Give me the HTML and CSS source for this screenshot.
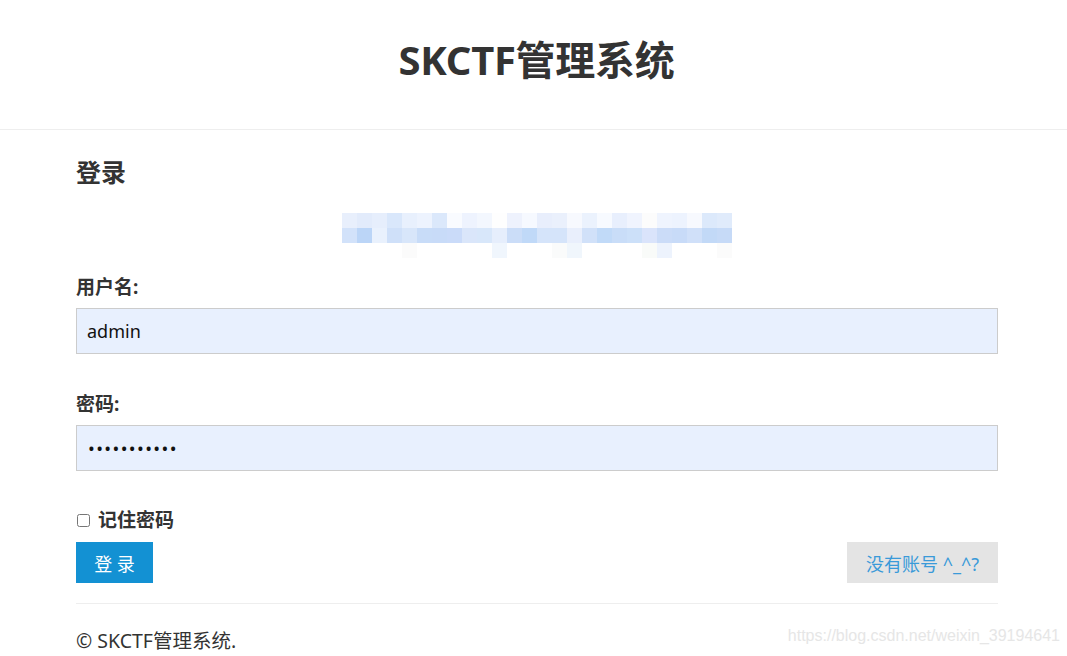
FILE: index.html
```html
<!DOCTYPE html>
<html lang="zh-CN">
<head>
<meta charset="utf-8">
<title>SKCTF管理系统</title>
<link rel="stylesheet" href="styles.css">
</head>
<body>
<header class="site-header">
  <h1 class="site-title">SKCTF管理系统</h1>
</header>
<main class="container">
  <h2 class="page-heading">登录</h2>
  <div class="captcha">
    <div class="px" style="background:#e8effc"></div><div class="px" style="background:#e2ebfb"></div><div class="px" style="background:#e6eefc"></div><div class="px" style="background:#d9e7fb"></div><div class="px" style="background:#e8f0fd"></div><div class="px" style="background:#edf3fe"></div><div class="px" style="background:#dbe8fb"></div><div class="px" style="background:#f9fbff"></div><div class="px" style="background:#eef3fe"></div><div class="px" style="background:#f3f7fe"></div><div class="px" style="background:#fefefe"></div><div class="px" style="background:#eef2fd"></div><div class="px" style="background:#f6f9ff"></div><div class="px" style="background:#e8eefc"></div><div class="px" style="background:#eaf0fc"></div><div class="px" style="background:#f7f9fe"></div><div class="px" style="background:#ebf2fd"></div><div class="px" style="background:#f7faff"></div><div class="px" style="background:#e8effd"></div><div class="px" style="background:#f0f4fe"></div><div class="px" style="background:#fcfcfc"></div><div class="px" style="background:#eff4fe"></div><div class="px" style="background:#edf3fe"></div><div class="px" style="background:#f7f9fe"></div><div class="px" style="background:#dce9fb"></div><div class="px" style="background:#e0ebfb"></div>
    <div class="px" style="background:#d2e2fa"></div><div class="px" style="background:#bbd5f7"></div><div class="px" style="background:#e9f1fd"></div><div class="px" style="background:#cfe0f9"></div><div class="px" style="background:#d8e6fa"></div><div class="px" style="background:#c8dcf8"></div><div class="px" style="background:#c8dbf8"></div><div class="px" style="background:#cadbf9"></div><div class="px" style="background:#dae6fa"></div><div class="px" style="background:#d8e7fa"></div><div class="px" style="background:#e6eefc"></div><div class="px" style="background:#cbddf8"></div><div class="px" style="background:#c0d9f8"></div><div class="px" style="background:#d5e4fa"></div><div class="px" style="background:#d5e4fa"></div><div class="px" style="background:#e9effc"></div><div class="px" style="background:#d1e1f9"></div><div class="px" style="background:#c1daf8"></div><div class="px" style="background:#c9ddf8"></div><div class="px" style="background:#cce0f9"></div><div class="px" style="background:#dae4fb"></div><div class="px" style="background:#cbdcf8"></div><div class="px" style="background:#c8dbf8"></div><div class="px" style="background:#d0e0f9"></div><div class="px" style="background:#c2d9f7"></div><div class="px" style="background:#c6daf7"></div>
    <div class="px"></div><div class="px"></div><div class="px"></div><div class="px"></div><div class="px" style="background:#fbfbfb"></div><div class="px"></div><div class="px"></div><div class="px"></div><div class="px"></div><div class="px"></div><div class="px" style="background:#f0f6fd"></div><div class="px"></div><div class="px"></div><div class="px"></div><div class="px" style="background:#fafbfb"></div><div class="px" style="background:#f0f6fc"></div><div class="px"></div><div class="px"></div><div class="px"></div><div class="px"></div><div class="px" style="background:#f9fbf9"></div><div class="px" style="background:#edf3fd"></div><div class="px"></div><div class="px"></div><div class="px"></div><div class="px" style="background:#fbfbfb"></div>
  </div>
  <form class="login-form">
    <label class="field-label" for="username">用户名:</label>
    <input class="field-input" id="username" type="text" value="admin">
    <label class="field-label field-label-2" for="password">密码:</label>
    <input class="field-input field-password" id="password" type="password" value="aaaaaaaaaaa">
    <label class="remember"><input type="checkbox" class="remember-box"><span>记住密码</span></label>
    <div class="actions">
      <button type="button" class="btn btn-primary">登 录</button>
      <button type="button" class="btn btn-light">没有账号 ^_^?</button>
    </div>
  </form>
  <hr class="divider">
  <footer class="footer">© SKCTF管理系统.</footer>
</main>
<div class="watermark">https://blog.csdn.net/weixin_39194641</div>
</body>
</html>
```
FILE: styles.css
```css
* { box-sizing: border-box; }
html, body { margin: 0; padding: 0; }
body {
  font-family: "Noto Sans", "Noto Sans CJK SC", sans-serif;
  color: #333;
  background: #fff;
  width: 1067px;
  height: 656px;
  overflow: hidden;
  position: relative;
}
.site-header {
  height: 130px;
  border-bottom: 1px solid #eee;
  display: flex;
  align-items: center;
  justify-content: center;
  padding-bottom: 10px;
}
.site-title {
  margin: 0;
  font-size: 40px;
  font-weight: 700;
  line-height: 40px;
  color: #333;
  letter-spacing: -0.3px;
  padding-left: 6px;
}
.container {
  margin: 0 69px 0 76px;
  padding-top: 30px;
}
.page-heading {
  margin: 0;
  font-size: 25px;
  line-height: 24px;
  font-weight: 700;
}
.captcha {
  margin: 29px auto 0;
  width: 390px;
  display: grid;
  grid-template-columns: repeat(26, 15px);
  grid-auto-rows: 15px;
}
.px { background: #fff; }
.login-form { display: flex; flex-direction: column; }
.field-label {
  margin-top: 19px;
  font-size: 19px;
  line-height: 20px;
  font-weight: 700;
}
.field-label-2 { margin-top: 40px; }
.field-input {
  margin-top: 11px;
  height: 46px;
  width: 100%;
  border: 1px solid #ccc;
  background: #e8f0fe;
  padding: 0 10px;
  font-family: "Noto Sans", "Noto Sans CJK SC", sans-serif;
  font-size: 18px;
  color: #111;
  outline: none;
}
.field-password {
  letter-spacing: 1.4px;
  padding-left: 11px;
}
.remember {
  margin-top: 39px;
  display: flex;
  align-items: center;
  font-size: 19px;
  line-height: 20px;
  font-weight: 700;
}
.remember-box {
  margin: 0 8px 0 1px;
  width: 13px;
  height: 13px;
}
.actions {
  margin-top: 12px;
  display: flex;
  justify-content: space-between;
}
.btn {
  height: 41px;
  border: none;
  border-radius: 0;
  font-family: "Noto Sans", "Noto Sans CJK SC", sans-serif;
  font-size: 18px;
  padding: 0;
}
.btn-primary {
  width: 77px;
  background: #1391d3;
  color: #fff;
}
.btn-light {
  width: 151px;
  background: #e4e4e4;
  color: #3a9ad9;
}
.divider {
  margin: 20px 0 0;
  border: 0;
  border-top: 1px solid #eee;
  height: 0;
}
.footer {
  margin-top: 27px;
  font-size: 19.5px;
  line-height: 20px;
}
.watermark {
  position: absolute;
  right: 7px;
  bottom: 11px;
  font-family: "Liberation Sans", sans-serif;
  font-size: 16px;
  color: #e6e6e6;
}
```
